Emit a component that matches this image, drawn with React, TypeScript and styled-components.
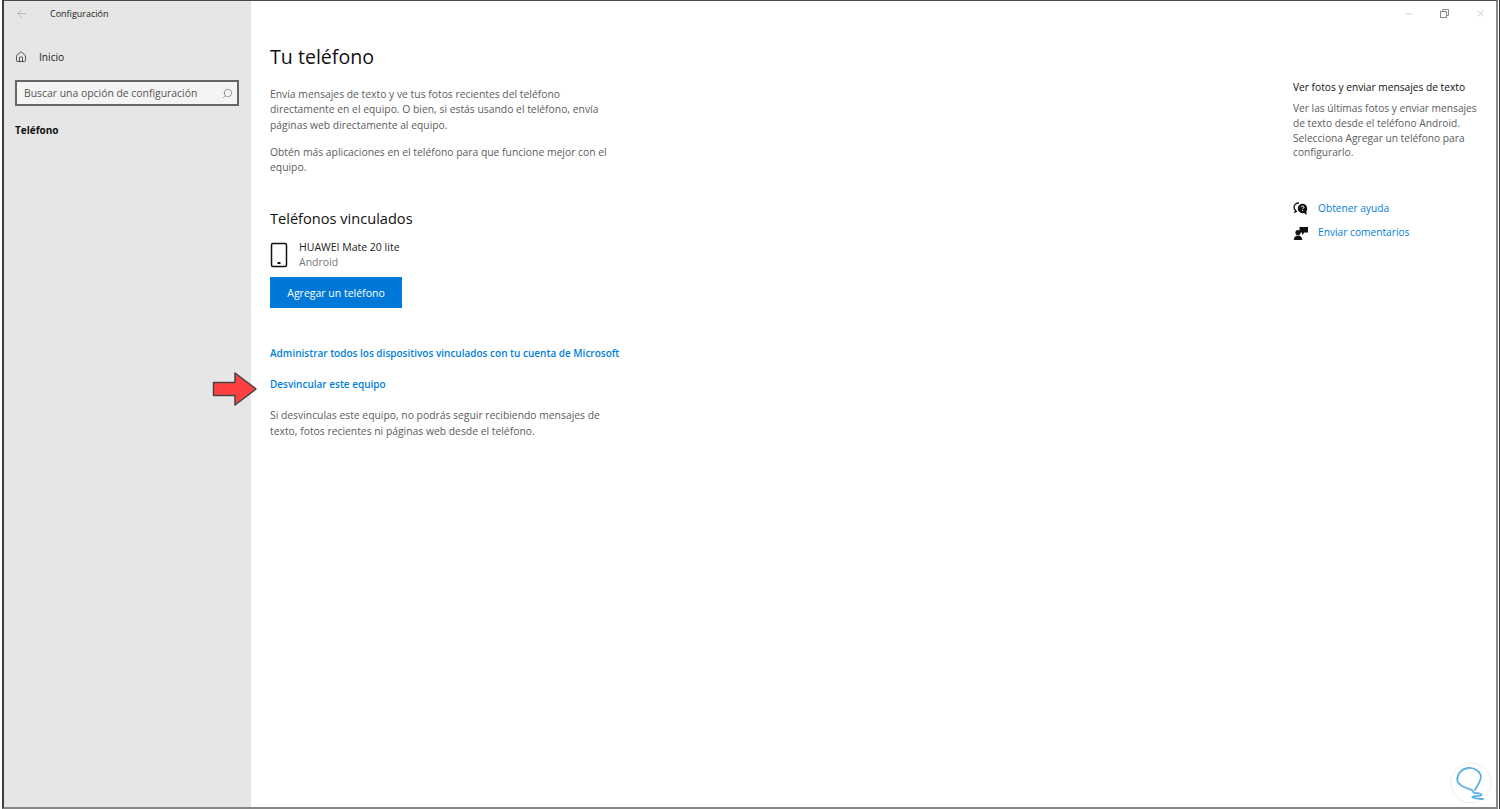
import styled, { createGlobalStyle } from "styled-components";
import { ArrowLeft, House, Search, Minus, X } from "lucide-react";

const GlobalStyle = createGlobalStyle`
  html, body {
    margin: 0;
    padding: 0;
    background: #fff;
  }
  body {
    font-family: "Open Sans", "Noto Sans", "Liberation Sans", sans-serif;
  }
`;

const Screen = styled.div`
  width: 1500px;
  height: 809px;
  box-sizing: border-box;
  padding: 0 1px 0 2px;
  border-right: 1px solid #3c3c3c;
  background: #fff;
`;

const Frame = styled.div`
  width: 100%;
  height: 100%;
  box-sizing: border-box;
  display: flex;
  overflow: hidden;
  background: #fff;
  border-top: 1px solid #4a4a4a;
  border-left: 2px solid #3c3c3c;
  border-right: 2px solid #8a8a8a;
  border-bottom: 2px solid #858585;
  position: relative;
`;

const Sidebar = styled.aside`
  width: 247px;
  flex: none;
  background: #e6e6e6;
  display: flex;
  flex-direction: column;
  padding: 0 11px;
  box-sizing: border-box;
`;

const TitleBar = styled.div`
  height: 24px;
  display: flex;
  align-items: center;
  color: #a3a3a3;
`;

const AppTitle = styled.span`
  font-size: 9px;
  color: #222;
  margin-left: 22px;
`;

const HomeRow = styled.div`
  display: flex;
  align-items: center;
  gap: 12px;
  margin-top: 22px;
  height: 20px;
  color: #1a1a1a;
  font-size: 10.2px;
`;

const SearchBox = styled.div`
  margin-top: 13px;
  height: 26px;
  width: 224px;
  box-sizing: border-box;
  border: 2px solid #666;
  background: #f4f4f4;
  display: flex;
  align-items: center;
  justify-content: space-between;
  padding: 0 4px 0 7px;
  font-size: 10.4px;
  color: #555;
`;

const NavItem = styled.div`
  margin-top: 17px;
  font-size: 10px;
  font-weight: 700;
  color: #111;
`;

const Main = styled.main`
  flex: 1;
  display: flex;
  justify-content: space-between;
  min-width: 0;
`;

const Content = styled.div`
  width: 380px;
  padding: 41px 0 0 19px;
  display: flex;
  flex-direction: column;
`;

const PageTitle = styled.h1`
  margin: 0;
  font-size: 19.6px;
  line-height: 30px;
  font-weight: 400;
  color: #111;
`;

const Paragraph = styled.p<{ $top: number }>`
  margin: ${(p) => p.$top}px 0 0;
  width: 355px;
  font-size: 10.35px;
  line-height: 15.3px;
  color: #5c5c5c;
`;

const SectionTitle = styled.h2`
  margin: 32px 0 0;
  font-size: 14.6px;
  line-height: 22px;
  font-weight: 400;
  color: #111;
`;

const DeviceRow = styled.div`
  display: flex;
  align-items: center;
  gap: 10px;
  margin-top: 11px;
`;

const DeviceName = styled.div`
  font-size: 10.5px;
  line-height: 15px;
  color: #222;
`;

const DeviceOs = styled.div`
  font-size: 10.5px;
  line-height: 15px;
  color: #777;
`;

const PrimaryButton = styled.button`
  margin-top: 7px;
  width: 132px;
  height: 31px;
  border: 0;
  background: #0078d7;
  color: #fff;
  font-family: inherit;
  font-size: 10.5px;
`;

const TextLink = styled.a<{ $top?: number; $strong?: boolean }>`
  display: block;
  margin-top: ${(p) => p.$top ?? 0}px;
  font-size: ${(p) => (p.$strong ? 10 : 10.2)}px;
  line-height: 15px;
  font-weight: ${(p) => (p.$strong ? 600 : 400)};
  color: #007fdb;
  white-space: nowrap;
`;

const Aside = styled.div`
  width: 194px;
  padding: 79px 0 0;
  box-sizing: border-box;
  margin-right: 9px;
`;

const WindowButtons = styled.div`
  position: absolute;
  top: 7px;
  right: 10px;
  display: flex;
  align-items: center;
  gap: 26px;
  color: #8a8a8a;
`;

const AsideTitle = styled.div`
  font-size: 10.2px;
  line-height: 15px;
  color: #111;
`;

const AsideText = styled.p`
  margin: 6px 0 0;
  font-size: 10.2px;
  line-height: 14.8px;
  color: #5c5c5c;
`;

const HelpList = styled.div`
  margin-top: 41px;
  display: flex;
  flex-direction: column;
  gap: 9px;
`;

const HelpRow = styled.div`
  display: flex;
  align-items: center;
  gap: 9px;
  height: 15px;
`;

const Pointer = styled.svg`
  position: absolute;
  left: 208px;
  top: 370px;
`;

const Watermark = styled.svg`
  position: absolute;
  right: 0;
  bottom: 0;
`;

const PhoneIcon = () => (
  <svg width="19" height="27" viewBox="0 0 19 27" fill="none">
    <rect x="1.5" y="1.5" width="15" height="23" rx="1.5" stroke="#111" strokeWidth="1.5" />
    <rect x="7.5" y="20" width="3" height="2" fill="#111" />
  </svg>
);

const RestoreIcon = () => (
  <svg width="9" height="9" viewBox="0 0 9 9" fill="none" stroke="currentColor">
    <rect x="0.5" y="2.5" width="6" height="6" />
    <path d="M2.5 2.5V.5h6v6h-2" />
  </svg>
);

const HelpIcon = () => (
  <svg width="16" height="14" viewBox="0 0 16 14">
    <path d="M6 1C3 1 1 3 1 5.2c0 1.2.6 2.2 1.5 3L2 10l2.2-1" fill="none" stroke="#111" strokeWidth="1.3" />
    <circle cx="9.5" cy="6.5" r="4.7" fill="#111" />
    <path d="M10 10l3.5 3V8z" fill="#111" />
    <path d="M8 5.2c.2-1.5 3-1.5 3 0 0 1-1.4 1-1.4 2" fill="none" stroke="#fff" strokeWidth="1" />
    <rect x="9.1" y="8" width="1" height="1" fill="#fff" />
  </svg>
);

const FeedbackIcon = () => (
  <svg width="16" height="14" viewBox="0 0 16 14" fill="#111">
    <circle cx="5" cy="6.5" r="2.6" />
    <path d="M0.8 14c0-3 1.800-4.500 4.200-4.500S9.200 11 9.200 14z" />
    <path d="M6.500 1h8.500v5.500h-3.500L9 9V6.500H6.500z" />
  </svg>
);

export default function App() {
  return (
    <>
      <GlobalStyle />
      <Screen>
        <Frame>
          <Sidebar>
            <TitleBar>
              <ArrowLeft size={13} strokeWidth={1.2} />
              <AppTitle>Configuración</AppTitle>
            </TitleBar>
            <HomeRow>
              <House size={12} strokeWidth={1.4} />
              Inicio
            </HomeRow>
            <SearchBox>
              Buscar una opción de configuración
              <Search size={11} strokeWidth={1.2} style={{ transform: "scaleX(-1)" }} />
            </SearchBox>
            <NavItem>Teléfono</NavItem>
          </Sidebar>
          <Main>
            <Content>
              <PageTitle>Tu teléfono</PageTitle>
              <Paragraph $top={15}>
                Envía mensajes de texto y ve tus fotos recientes del teléfono
                <br />
                directamente en el equipo. O bien, si estás usando el teléfono, envía
                <br />
                páginas web directamente al equipo.
              </Paragraph>
              <Paragraph $top={12}>
                Obtén más aplicaciones en el teléfono para que funcione mejor con el
                <br />
                equipo.
              </Paragraph>
              <SectionTitle>Teléfonos vinculados</SectionTitle>
              <DeviceRow>
                <PhoneIcon />
                <div>
                  <DeviceName>HUAWEI Mate 20 lite</DeviceName>
                  <DeviceOs>Android</DeviceOs>
                </div>
              </DeviceRow>
              <PrimaryButton>Agregar un teléfono</PrimaryButton>
              <TextLink $top={38} $strong>
                Administrar todos los dispositivos vinculados con tu cuenta de Microsoft
              </TextLink>
              <TextLink $top={16} $strong>
                Desvincular este equipo
              </TextLink>
              <Paragraph $top={16}>
                Si desvinculas este equipo, no podrás seguir recibiendo mensajes de
                <br />
                texto, fotos recientes ni páginas web desde el teléfono.
              </Paragraph>
            </Content>
            <Aside>
              <AsideTitle>Ver fotos y enviar mensajes de texto</AsideTitle>
              <AsideText>
                Ver las últimas fotos y enviar mensajes
                <br />
                de texto desde el teléfono Android.
                <br />
                Selecciona Agregar un teléfono para
                <br />
                configurarlo.
              </AsideText>
              <HelpList>
                <HelpRow>
                  <HelpIcon />
                  <TextLink>Obtener ayuda</TextLink>
                </HelpRow>
                <HelpRow>
                  <FeedbackIcon />
                  <TextLink>Enviar comentarios</TextLink>
                </HelpRow>
              </HelpList>
            </Aside>
          </Main>
          <WindowButtons>
            <Minus size={10} strokeWidth={1} />
            <RestoreIcon />
            <X size={11} strokeWidth={1} />
          </WindowButtons>
          <Pointer width="46" height="36" viewBox="0 0 46 36">
            <path
              d="M1.500 11.500H23V2L44 18 23 34V24.500H1.500z"
              fill="#ff4040"
              stroke="#444"
              strokeWidth="1.500"
              strokeLinejoin="round"
            />
          </Pointer>
          <Watermark width="54" height="70" viewBox="0 0 54 70" fill="none">
            <circle cx="29" cy="46" r="20" stroke="#eeeef4" strokeWidth="1" />
            <path
              d="M33 53C36 47 40 43 38.700 38 37 33 31 30.500 26 31 20 31.500 15 37 15.300 43 15.500 48 22 50 30 53L32 56C35 56 39 56.500 39.700 58 38 60 32 58.500 30.300 60 32 62 37 61.500 41 62"
              stroke="#5cb1e3"
              strokeWidth="1.800"
              strokeLinecap="round"
              strokeLinejoin="round"
            />
          </Watermark>
        </Frame>
      </Screen>
    </>
  );
}
